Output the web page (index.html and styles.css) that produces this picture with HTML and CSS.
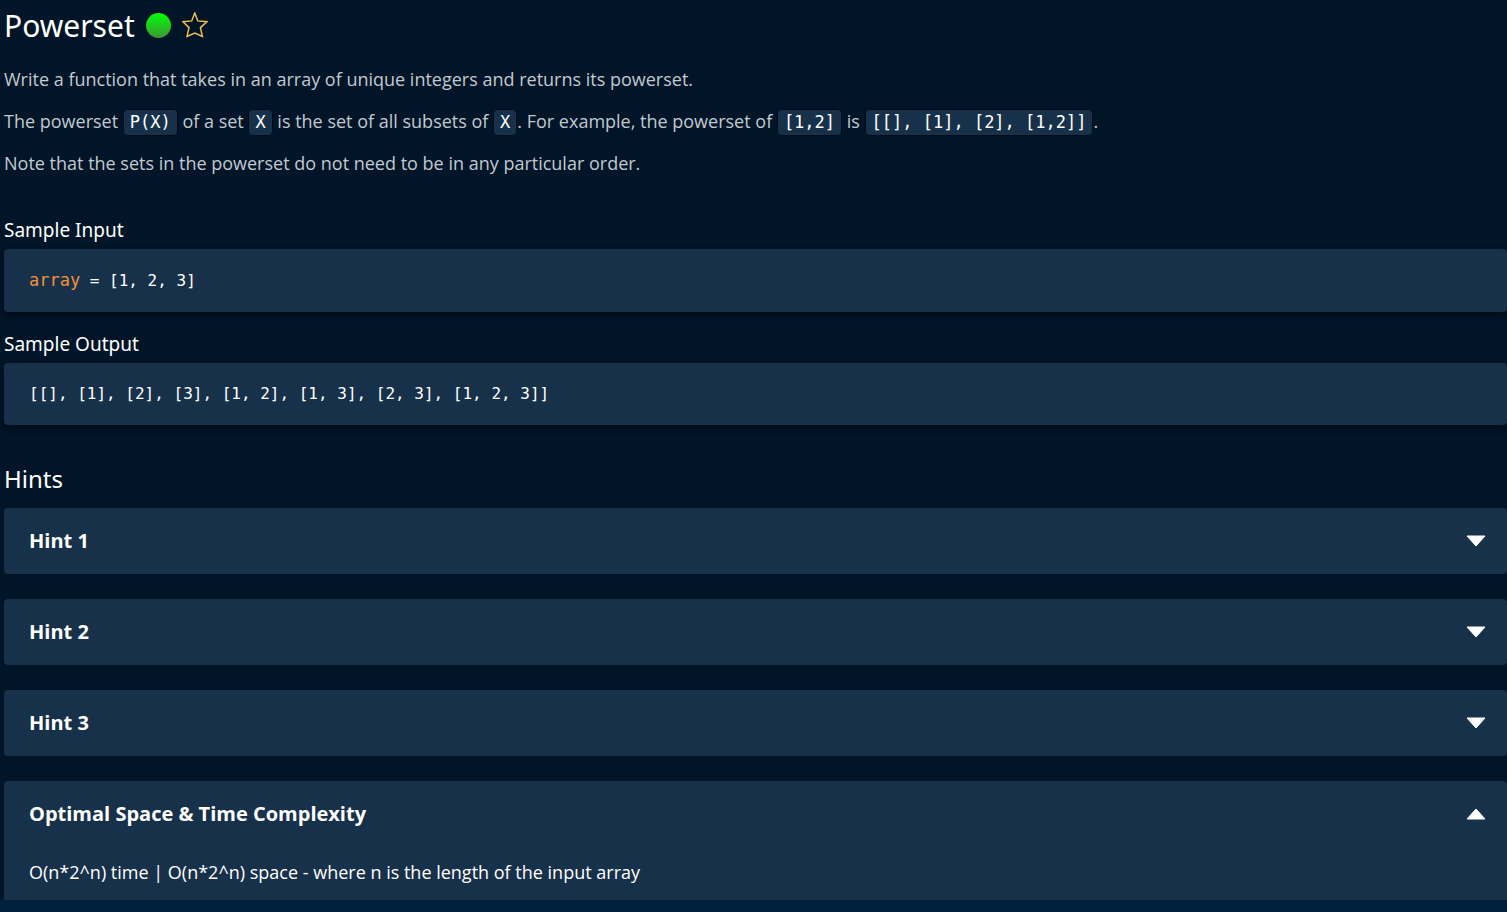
FILE: index.html
```html
<!DOCTYPE html>
<html lang="en">
<head>
<meta charset="utf-8">
<meta name="viewport" content="width=device-width, initial-scale=1">
<title>Powerset</title>
<link rel="stylesheet" href="styles.css">
</head>
<body>
<main class="prompt">
  <header class="title-bar">
    <h1 class="title">Powerset</h1>
    <span class="difficulty" role="img" aria-label="Easy"></span>
    <button class="star" type="button" aria-label="Add to favorites">
      <svg viewBox="0 0 26 26" width="26" height="26" aria-hidden="true"><path d="M12.8 1L15.8 8.9L24.9 9.7L18.4 15.6L20.4 24.4L12.8 21L5 24.4L7 15.6L0.9 9.7L9.7 8.9Z"/></svg>
    </button>
  </header>
  <div class="description">
    <p>Write a function that takes in an array of unique integers and returns its powerset.</p>
    <p>The powerset <code>P(X)</code> of a set <code>X</code> is the set of all subsets of <code>X</code>. For example, the powerset of <code>[1,2]</code> is <code>[[], [1], [2], [1,2]]</code>.</p>
    <p>Note that the sets in the powerset do not need to be in any particular order.</p>
  </div>
  <section class="sample">
    <h2 class="sample-title">Sample Input</h2>
    <pre class="sample-code"><span class="variable">array</span> = [1, 2, 3]</pre>
  </section>
  <section class="sample">
    <h2 class="sample-title">Sample Output</h2>
    <pre class="sample-code">[[], [1], [2], [3], [1, 2], [1, 3], [2, 3], [1, 2, 3]]</pre>
  </section>
  <section class="hints">
    <h2 class="hints-title">Hints</h2>
    <div class="cards">
      <div class="card"><button class="card-toggle" type="button" aria-expanded="false">Hint 1<svg class="caret" viewBox="0 0 20 12" aria-hidden="true"><path d="M1 1H19L10 11Z"/></svg></button></div>
      <div class="card"><button class="card-toggle" type="button" aria-expanded="false">Hint 2<svg class="caret" viewBox="0 0 20 12" aria-hidden="true"><path d="M1 1H19L10 11Z"/></svg></button></div>
      <div class="card"><button class="card-toggle" type="button" aria-expanded="false">Hint 3<svg class="caret" viewBox="0 0 20 12" aria-hidden="true"><path d="M1 1H19L10 11Z"/></svg></button></div>
      <div class="card card-open">
        <button class="card-toggle" type="button" aria-expanded="true" aria-controls="complexity">Optimal Space &amp; Time Complexity<svg class="caret" viewBox="0 0 20 12" aria-hidden="true"><path d="M1 11H19L10 1Z"/></svg></button>
        <p class="card-body" id="complexity">O(n*2^n) time | O(n*2^n) space - where n is the length of the input array</p>
      </div>
    </div>
  </section>
</main>
</body>
</html>
```
FILE: styles.css
```css
* {
  box-sizing: border-box;
}

body {
  margin: 0;
  background: #00203b;
  color: #fff;
  font-family: "Open Sans", "Noto Sans", sans-serif;
  font-size: 18px;
}

.prompt {
  padding-left: 4px;
  background: #001528;
}

h1, h2, p, pre {
  margin: 0;
}

.title-bar {
  display: flex;
  align-items: center;
  gap: 11px;
  height: 50px;
}

.title {
  padding-top: 2px;
  font-family: "Noto Sans", sans-serif;
  font-size: 30px;
  font-weight: 400;
  line-height: 40px;
}

.difficulty {
  width: 25px;
  height: 25px;
  border-radius: 50%;
  background: linear-gradient(#00ff0a, #3c9632);
}

.star {
  display: flex;
  padding: 0;
  border: 0;
  background: none;
  cursor: pointer;
}

.star path {
  fill: none;
  stroke: #f4bd4f;
  stroke-width: 1.5;
}

.description {
  display: grid;
  gap: 17px;
  padding: 17px 0 41px;
  color: #c2c9d0;
  line-height: 25px;
}

.description code {
  padding: 2px 6px 3px;
  border: 1px solid #000b17;
  border-radius: 5px;
  background: #17314b;
  color: #fff;
  font-family: "DejaVu Sans Mono", monospace;
  font-size: 17px;
  line-height: 20px;
}

.sample {
  padding-bottom: 19px;
}

.sample-title {
  padding-bottom: 6px;
  font-family: "Noto Sans", sans-serif;
  font-size: 19px;
  font-weight: 400;
  line-height: 26px;
}

.sample-code {
  padding: 19px 25px;
  border-radius: 4px;
  background: #17314b;
  box-shadow: 0 3px 6px #000b17;
  font-family: "DejaVu Sans Mono", monospace;
  font-size: 16px;
  line-height: 24px;
}

.variable {
  color: #f09038;
  font-size: 17px;
}

.hints {
  padding-top: 18px;
}

.hints-title {
  padding-bottom: 12px;
  font-family: "Noto Sans", sans-serif;
  font-size: 24px;
  font-weight: 400;
  line-height: 34px;
}

.cards {
  display: grid;
  gap: 25px;
}

.card {
  border-radius: 4px;
  background: #17314b;
}

.card-open {
  border-radius: 4px 4px 0 0;
}

.card-toggle {
  display: flex;
  align-items: center;
  justify-content: space-between;
  width: 100%;
  padding: 19px 21px 19px 25px;
  border: 0;
  background: none;
  color: inherit;
  font: 700 20px/28px "Open Sans", "Noto Sans", sans-serif;
  text-align: left;
  cursor: pointer;
}

.caret {
  width: 20px;
  height: 12px;
  fill: #fff;
  stroke: #fff;
  stroke-linejoin: round;
}

.card-body {
  padding: 13px 25px 15px;
  line-height: 25px;
}
```
